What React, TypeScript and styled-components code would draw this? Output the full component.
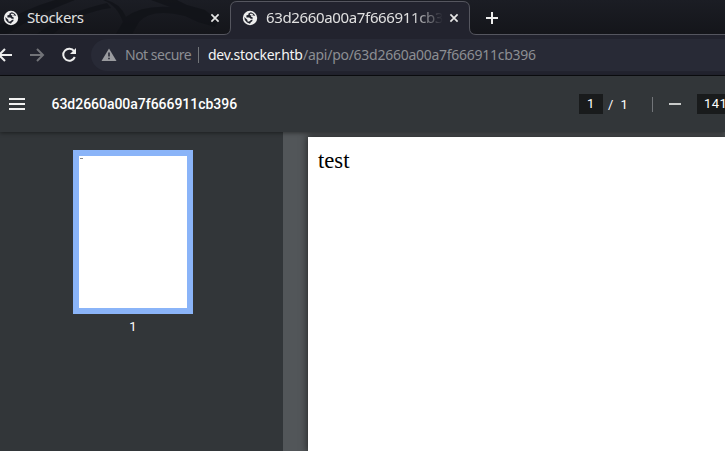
import React from "react";
import styled, { createGlobalStyle } from "styled-components";

const GlobalStyle = createGlobalStyle`
  * { box-sizing: border-box; }
  html, body { margin: 0; overflow: hidden; background: #323639; }
`;

const Browser = styled.div`
  width: 725px;
  height: 451px;
  display: flex;
  flex-direction: column;
  overflow: hidden;
  color: #e0e0e0;
  font-family: "Noto Sans", sans-serif;
`;

const TabStrip = styled.header`
  position: relative;
  flex: none;
  height: 35px;
  display: flex;
  background: linear-gradient(#1b1d24, #14151a);
`;

const StripArt = styled.svg`
  position: absolute;
  inset: 0;
`;

const Tab = styled.div<{ $width: number; $inset: number }>`
  position: relative;
  width: ${(p) => p.$width}px;
  height: 35px;
  padding-left: ${(p) => p.$inset}px;
  display: flex;
  align-items: center;
`;

const TabTitle = styled.span<{ $width: number; $spacing: number; $fade?: boolean }>`
  width: ${(p) => p.$width}px;
  margin-left: 8px;
  padding-bottom: 2px;
  font-size: 15px;
  line-height: 20px;
  letter-spacing: ${(p) => p.$spacing}px;
  white-space: nowrap;
  overflow: hidden;
  ${(p) => p.$fade && "mask-image: linear-gradient(90deg, #000 146px, transparent 177px);"}
`;

const NewTab = styled.div`
  position: relative;
  display: flex;
  align-items: center;
  padding-left: 16px;
`;

const AddressRow = styled.div`
  flex: none;
  height: 41px;
  display: flex;
  align-items: center;
  background: #22232e;
  border-bottom: 1px solid #0c0d10;
`;

const NavButtons = styled.div`
  width: 91px;
  display: flex;
  flex: none;
`;

const Omnibox = styled.div`
  flex: 1;
  height: 32px;
  display: flex;
  align-items: center;
  padding-left: 10px;
  border-radius: 16px 0 0 16px;
  background: #282a36;
  font-size: 14px;
  line-height: 20px;
  white-space: nowrap;
`;

const Security = styled.span`
  width: 73px;
  margin-left: 8px;
  color: #8c8e93;
  letter-spacing: -0.5px;
`;

const Separator = styled.span<{ $height: number; $right: number }>`
  flex: none;
  width: 1px;
  height: ${(p) => p.$height}px;
  margin-right: ${(p) => p.$right}px;
  background: #727579;
`;

const UrlPart = styled.span<{ $width: number; $spacing: number; $host?: boolean }>`
  flex: none;
  width: ${(p) => p.$width}px;
  color: ${(p) => (p.$host ? "#f4f4f4" : "#8c8e93")};
  letter-spacing: ${(p) => p.$spacing}px;
`;

const PdfToolbar = styled.div`
  position: relative;
  z-index: 1;
  flex: none;
  height: 56px;
  display: flex;
  align-items: center;
  padding-left: 9px;
  background: #323639;
  box-shadow: 0 1px 4px rgba(0, 0, 0, 0.45);
  color: #fff;
  font-family: Roboto, sans-serif;
`;

const DocumentTitle = styled.span`
  flex: none;
  width: 528px;
  padding-left: 0.5px;
  margin-left: 26px;
  font-size: 14px;
  font-weight: 500;
  letter-spacing: -0.03px;
  white-space: nowrap;
`;

const Field = styled.span<{ $width: number }>`
  flex: none;
  width: ${(p) => p.$width}px;
  height: 20px;
  padding-left: 7px;
  background: #191b1c;
  font-size: 13px;
  line-height: 20px;
  letter-spacing: 0.4px;
`;

const PageField = styled(Field)`
  padding-left: 8px;
`;

const PageTotal = styled.span`
  flex: none;
  width: 49px;
  padding-left: 5px;
  font-size: 13px;
  word-spacing: 4px;
  white-space: pre;
`;

const ZoomOut = styled.span`
  flex: none;
  width: 12px;
  height: 2px;
  margin-right: 16px;
  background: #c8cac9;
`;

const Viewer = styled.main`
  flex: 1;
  display: flex;
  background: #525659;
`;

const Thumbnails = styled.aside`
  width: 283px;
  flex: none;
  display: flex;
  flex-direction: column;
  align-items: center;
  padding: 18px 17px 0 0;
  background: #323639;
  color: #fff;
  font: 13px/16px Roboto, sans-serif;
`;

const Thumbnail = styled.div`
  width: 120px;
  height: 164px;
  margin-bottom: 5px;
  border: 6px solid #8ab4f8;
  background: #fff;
`;

const TinyText = styled.div`
  width: 3px;
  height: 1px;
  margin: 2px 0 0 1px;
  background: #888;
`;

const Page = styled.article`
  flex: 1;
  margin: 5px 0 0 25px;
  padding: 10px;
  background: #fff;
  box-shadow: 0 0 7px 1px rgba(0, 0, 0, 0.55);
  color: #000;
  font: 22.7px/28px "Liberation Serif", serif;
`;

const Globe = () => (
  <svg width="16" height="16" viewBox="0 0 16 16">
    <circle cx="8" cy="8" r="7.2" fill="#eee" />
    <path
      d="M8.9 2.2 6.6 3.2 6.4 4.7 4.3 5.6 4.5 7.5H7.3L8.8 8.8H10.7V7.4L9 6.4V5.3L11.4 5.5 13.2 6.1 12.1 4.1 10.5 2.9ZM2.2 7.1 2.8 10.1 5 12.6 8 13.8 8.8 12.3 10.4 11V9.4L8.3 10.3 7.2 11.4H5.6L5.3 9.8Z"
      fill="#20222c"
    />
    <path d="M7.7 3.7h2.6l1.1 1.5H8.1ZM6.3 9h2.3v1.3l-1.8 1Z" fill="#eee" />
  </svg>
);

const Close = () => (
  <svg width="10" height="10" viewBox="0 0 10 10">
    <path d="m1.4 1.4 7.2 7.2m0-7.2L1.4 8.6" stroke="#e6e6e6" strokeWidth="1.7" />
  </svg>
);

export default function App() {
  return (
    <Browser>
      <GlobalStyle />
      <TabStrip>
        <StripArt width="725" height="35" viewBox="0 0 725 35">
          <g fill="#101217" opacity=".7">
            <path d="M0 25Q24 9 55 0H75Q35 15 7 34H0ZM37 34Q66 12 107 3L111 8Q79 12 53 34Z" />
            <path d="M106 0Q120 3 126 17Q142 5 170 7L151 0H177L187 5L205 10L218 21L215 27L198 22L185 16Q151 8 139 22L132 34H116L123 22Q117 5 103 0Z" />
          </g>
          <path d="M0 34.5H224Q230.5 34.5 230.5 28V8Q230.5 1.5 237 1.5H463Q469.5 1.5 469.5 8V28Q469.5 34.5 476 34.5H725V36H0Z" fill="#22232e" />
          <path d="M0 34.5H224Q230.5 34.5 230.5 28V8Q230.5 1.5 237 1.5H463Q469.5 1.5 469.5 8V28Q469.5 34.5 476 34.5H725" fill="none" stroke="#55565f" />
        </StripArt>
        <Tab $width={231} $inset={3}>
          <Globe />
          <TabTitle $width={183} $spacing={-0.4}>Stockers</TabTitle>
          <Close />
        </Tab>
        <Tab $width={239} $inset={11}>
          <Globe />
          <TabTitle $width={183} $spacing={-0.35} $fade>63d2660a00a7f666911cb3</TabTitle>
          <Close />
        </Tab>
        <NewTab>
          <svg width="12" height="12" viewBox="0 0 12 12"><path d="M6 0v12M0 6h12" stroke="#eee" strokeWidth="2" /></svg>
        </NewTab>
      </TabStrip>
      <AddressRow>
        <NavButtons>
          <svg width="91" height="20" viewBox="0 0 91 20" fill="none" strokeWidth="2">
            <path d="M12 10H-1M5 4-1 10 5 16" stroke="#eee" />
            <path d="M30 10h12.5M37 4l6 6-6 6" stroke="#727378" />
            <path d="M74.1 6.2A6 6 0 1 0 74.8 12" stroke="#eee" />
            <path d="M76 3v6h-6Z" fill="#eee" />
          </svg>
        </NavButtons>
        <Omnibox>
          <svg width="16" height="16" viewBox="0 0 16 16"><path d="M8 1.5 15.5 14H.5Z" fill="#9a9b9f" /><path d="M8 5.5v4m0 1.2v1.6" stroke="#282a36" strokeWidth="1.6" /></svg>
          <Security>Not secure</Security>
          <Separator $height={16} $right={9} />
          <UrlPart $width={95} $spacing={-0.25} $host>dev.stocker.htb</UrlPart>
          <UrlPart $width={233} $spacing={-0.27}>/api/po/63d2660a00a7f666911cb396</UrlPart>
        </Omnibox>
      </AddressRow>
      <PdfToolbar>
        <svg width="16" height="12" viewBox="0 0 16 12"><path d="M0 1h16M0 6h16M0 11h16" stroke="#f1f1f1" strokeWidth="2" /></svg>
        <DocumentTitle>63d2660a00a7f666911cb396</DocumentTitle>
        <PageField $width={24}>1</PageField>
        <PageTotal>/ 1</PageTotal>
        <Separator $height={15} $right={16} />
        <ZoomOut />
        <Field $width={28}>141</Field>
      </PdfToolbar>
      <Viewer>
        <Thumbnails>
          <Thumbnail><TinyText /></Thumbnail>
          1
        </Thumbnails>
        <Page>test</Page>
      </Viewer>
    </Browser>
  );
}
